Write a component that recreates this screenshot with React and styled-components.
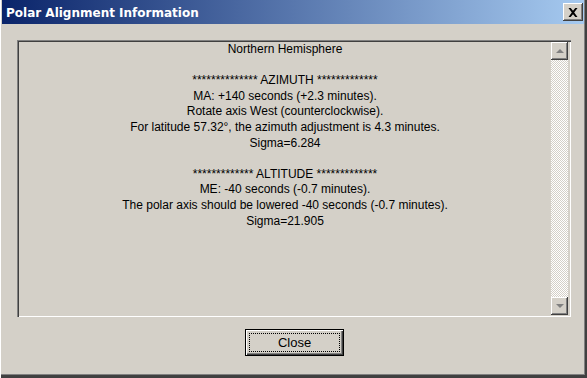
import { createGlobalStyle, styled } from "styled-components";

const GlobalStyle = createGlobalStyle`
    html, body {
        margin: 0;
        padding: 0;
        background: #d4d0c8;
    }
`;

const lines = [
    "Northern Hemisphere",
    "",
    "************** AZIMUTH *************",
    "MA: +140 seconds (+2.3 minutes).",
    "Rotate axis West (counterclockwise).",
    "For latitude 57.32°, the azimuth adjustment is 4.3 minutes.",
    "Sigma=6.284",
    "",
    "************* ALTITUDE *************",
    "ME: -40 seconds (-0.7 minutes).",
    "The polar axis should be lowered -40 seconds (-0.7 minutes).",
    "Sigma=21.905",
];

function App() {
    return (
        <>
            <GlobalStyle />
            <Window>
                <TitleBar>
                    <Title>Polar Alignment Information</Title>
                    <CloseBox>
                        <svg width="10" height="9" viewBox="0 0 10 9">
                            <path d="M0.5 0h2.2l2.3 2.8L7.3 0h2.2L6.2 4.5 9.5 9H7.3L5 6.2 2.7 9H0.5l3.3-4.5z" fill="#000" />
                        </svg>
                    </CloseBox>
                </TitleBar>
                <Body>
                    <TextBox>
                        <Content>
                            {lines.map((line, i) => (
                                <Line key={i}>{line || "\u00a0"}</Line>
                            ))}
                        </Content>
                        <ScrollBar>
                            <ScrollButton>
                                <Arrow $up />
                            </ScrollButton>
                            <Track />
                            <ScrollButton>
                                <Arrow />
                            </ScrollButton>
                        </ScrollBar>
                    </TextBox>
                    <Footer>
                        <Button>
                            <Focus>Close</Focus>
                        </Button>
                    </Footer>
                </Body>
            </Window>
        </>
    );
}

const Window = styled.div`
    width: 587px;
    height: 378px;
    box-sizing: border-box;
    padding: 0 3px 0 1px;
    border-left: 1px solid #ffffff;
    display: flex;
    flex-direction: column;
    box-shadow: inset -2px -3px 0 #404040, inset -3px -4px 0 #808080;
    font-family: "Liberation Sans", Arial, sans-serif;
    overflow: hidden;
`;

const TitleBar = styled.div`
    height: 24px;
    flex: none;
    display: flex;
    align-items: center;
    justify-content: space-between;
    padding: 0 1px 0 4px;
    background: linear-gradient(90deg, #0a246a 0%, #a6caf0 100%);
`;

const Title = styled.div`
    color: #ffffff;
    font-family: "DejaVu Sans", Verdana, sans-serif;
    font-weight: bold;
    font-size: 12px;
    padding-top: 1px;
`;

const CloseBox = styled.div`
    width: 20px;
    height: 18px;
    box-sizing: border-box;
    background: #d4d0c8;
    display: flex;
    align-items: center;
    justify-content: center;
    box-shadow: inset -1px -1px 0 #404040, inset 1px 1px 0 #ffffff,
        inset -2px -2px 0 #808080;
`;

const Body = styled.div`
    flex: 1;
    display: flex;
    flex-direction: column;
    padding: 16px 0 0 15px;
`;

const TextBox = styled.div`
    width: 554px;
    height: 277px;
    box-sizing: border-box;
    display: flex;
    box-shadow: inset 1px 1px 0 #808080, inset 2px 2px 0 #404040,
        inset -1px -1px 0 #ffffff, inset -2px -2px 0 #d4d0c8;
    padding: 2px;
`;

const Content = styled.div`
    flex: 1;
    text-align: center;
    font-size: 12px;
    line-height: 15.6px;
    color: #000000;
`;

const Line = styled.div`
    white-space: pre;
`;

const ScrollBar = styled.div`
    width: 17px;
    display: flex;
    flex-direction: column;
    margin-right: 1px;
`;

const ScrollButton = styled.div`
    width: 17px;
    height: 18px;
    box-sizing: border-box;
    flex: none;
    background: #d4d0c8;
    display: flex;
    align-items: center;
    justify-content: center;
    box-shadow: inset -1px -1px 0 #404040, inset 1px 1px 0 #ffffff,
        inset -2px -2px 0 #808080;
`;

const Arrow = styled.div`
    width: 0;
    height: 0;
    border-left: 4px solid transparent;
    border-right: 4px solid transparent;
    ${(p) => (p.$up ? "border-bottom: 4px solid #808080;" : "border-top: 4px solid #808080;")}
    margin-top: ${(p) => (p.$up ? "-1px" : "0")};
`;

const Track = styled.div`
    flex: 1;
    background-color: #ffffff;
    background-image: conic-gradient(#d4d0c8 25%, transparent 0 50%, #d4d0c8 0 75%, transparent 0);
    background-size: 2px 2px;
`;

const Footer = styled.div`
    display: flex;
    justify-content: center;
    padding-top: 12px;
    padding-right: 12px;
`;

const Button = styled.div`
    width: 99px;
    height: 27px;
    box-sizing: border-box;
    border: 1px solid #000000;
    background: #d4d0c8;
    padding: 3px;
    box-shadow: inset 1px 1px 0 #ffffff, inset -1px -1px 0 #404040,
        inset -2px -2px 0 #808080;
`;

const Focus = styled.div`
    height: 100%;
    box-sizing: border-box;
    border: 1px dotted #000000;
    display: flex;
    align-items: center;
    justify-content: center;
    font-size: 13px;
    color: #000000;
`;

export default App;
